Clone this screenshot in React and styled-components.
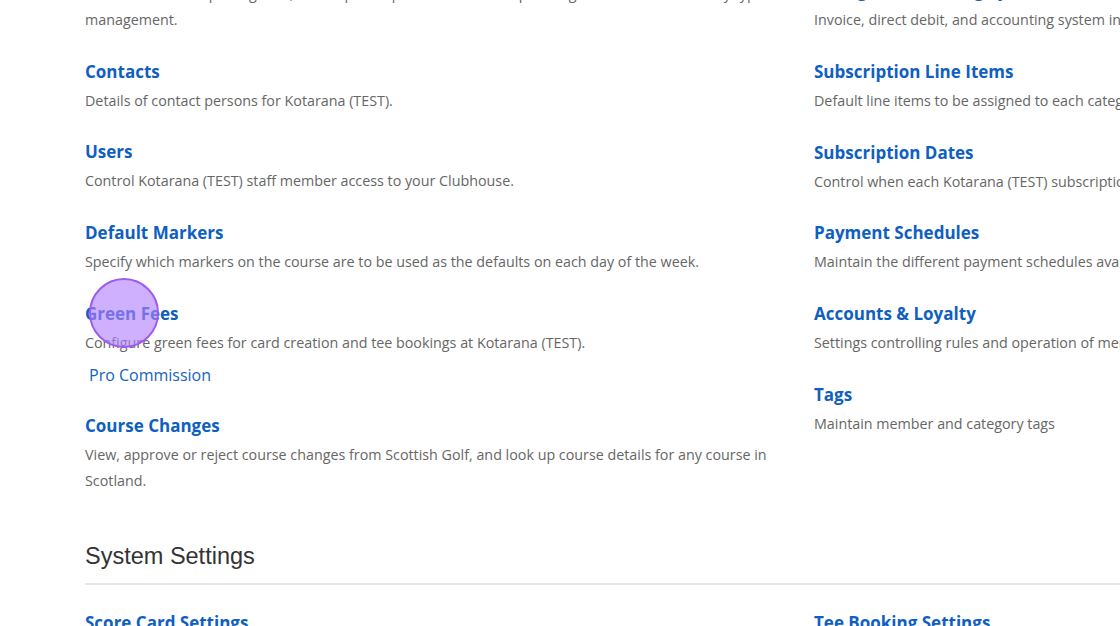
import React from 'react';
import styled, { createGlobalStyle } from 'styled-components';

const GlobalStyle = createGlobalStyle`
  html, body {
    margin: 0;
    padding: 0;
    background: #fff;
    overflow: hidden;
  }
`;

const Page = styled.div`
  position: relative;
  width: 1120px;
  height: 626px;
  overflow: hidden;
  font-family: "Open Sans", sans-serif;
`;

const Content = styled.div`
  width: 1480px;
  padding: 0 0 0 85px;
  margin-top: -12px;
`;

const Columns = styled.div`
  display: grid;
  grid-template-columns: 690px 690px;
  column-gap: 39px;
`;

const Column = styled.div`
  display: flex;
  flex-direction: column;
  margin-top: ${p => p.offset || 0}px;
`;

const Item = styled.div`
  margin-bottom: 26.7px;
`;

const Heading = styled.a`
  display: block;
  font-size: 17px;
  font-weight: 700;
  line-height: 24px;
  color: #0f5fc1;
  text-decoration: none;
  margin-bottom: 4px;
`;

const Description = styled.p`
  margin: 0;
  font-size: 14.3px;
  line-height: 26px;
  color: #666;
`;

const SubLink = styled.a`
  display: block;
  margin: 6px 0 0 4px;
  font-size: 16px;
  line-height: 26px;
  color: #1563c0;
  text-decoration: none;
`;

const SectionTitle = styled.h2`
  font-family: "Liberation Sans", Arial, sans-serif;
  font-weight: 400;
  font-size: 23.5px;
  line-height: 30px;
  color: #333;
  margin: 20px 0 0;
  padding-bottom: 12px;
  border-bottom: 2px solid #e6e6e6;
  width: 1400px;
`;

const SectionBody = styled(Columns)`
  margin-top: 26px;
`;

const ClickMarker = styled.div`
  position: absolute;
  left: 89px;
  top: 278px;
  width: 66px;
  height: 66px;
  border-radius: 50%;
  background: rgba(176, 128, 255, 0.62);
  border: 2px solid #9d5cf0;
`;

const left = [
  {
    title: 'Membership Categories',
    text: 'Define membership categories, subscription options and handicap settings for members of every type management.',
  },
  { title: 'Contacts', text: 'Details of contact persons for Kotarana (TEST).' },
  { title: 'Users', text: 'Control Kotarana (TEST) staff member access to your Clubhouse.' },
  { title: 'Default Markers', text: 'Specify which markers on the course are to be used as the defaults on each day of the week.' },
  {
    title: 'Green Fees',
    text: 'Configure green fees for card creation and tee bookings at Kotarana (TEST).',
    sub: 'Pro Commission',
  },
  {
    title: 'Course Changes',
    text: 'View, approve or reject course changes from Scottish Golf, and look up course details for any course in Scotland.',
  },
];

const right = [
  { title: 'Billing & Accounting Systems', text: 'Invoice, direct debit, and accounting system integration settings for Kotarana (TEST).' },
  { title: 'Subscription Line Items', text: 'Default line items to be assigned to each category when subscriptions are created.' },
  { title: 'Subscription Dates', text: 'Control when each Kotarana (TEST) subscription year starts and ends.' },
  { title: 'Payment Schedules', text: 'Maintain the different payment schedules available to members.' },
  { title: 'Accounts & Loyalty', text: 'Settings controlling rules and operation of member accounts and loyalty.' },
  { title: 'Tags', text: 'Maintain member and category tags' },
];

const renderItem = item => (
  <Item key={item.title}>
    <Heading href="#">{item.title}</Heading>
    <Description>{item.text}</Description>
    {item.sub && <SubLink href="#">{item.sub}</SubLink>}
  </Item>
);

export default function App() {
  return (
    <Page>
      <GlobalStyle />
      <Content>
        <Columns>
          <Column offset={-35}>{left.map(renderItem)}</Column>
          <Column offset={-8.7}>{right.map(renderItem)}</Column>
        </Columns>
        <SectionTitle>System Settings</SectionTitle>
        <SectionBody>
          <Column>
            <Heading href="#">Score Card Settings</Heading>
          </Column>
          <Column>
            <Heading href="#">Tee Booking Settings</Heading>
          </Column>
        </SectionBody>
      </Content>
      <ClickMarker />
    </Page>
  );
}
